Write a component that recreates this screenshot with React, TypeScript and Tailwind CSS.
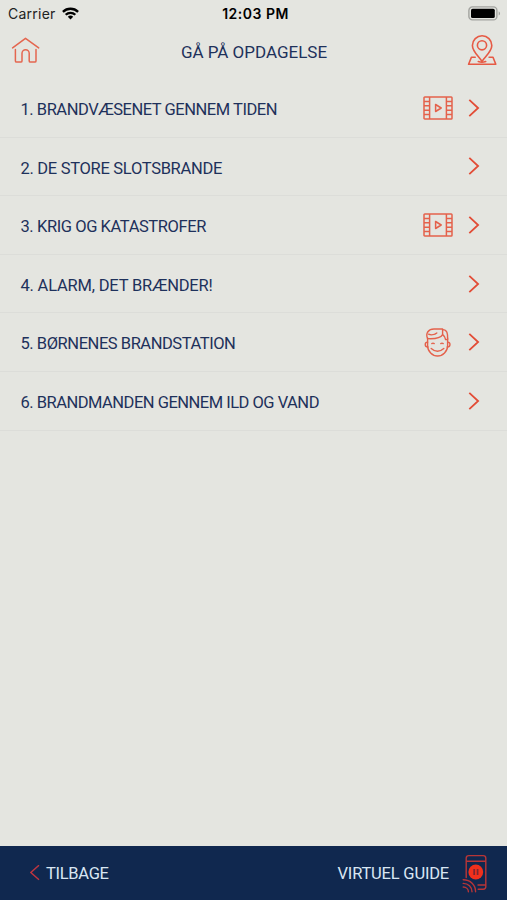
import React from 'react'

type RowIcon = 'film' | 'child'

interface Stop {
  title: string
  icon?: RowIcon
  tracking: string
}

const STOPS: Stop[] = [
  { title: '1. BRANDVÆSENET GENNEM TIDEN', icon: 'film', tracking: 'tracking-[-0.46px]' },
  { title: '2. DE STORE SLOTSBRANDE', tracking: 'tracking-[-0.3px]' },
  { title: '3. KRIG OG KATASTROFER', icon: 'film', tracking: 'tracking-[-0.42px]' },
  { title: '4. ALARM, DET BRÆNDER!', tracking: 'tracking-[-0.2px]' },
  { title: '5. BØRNENES BRANDSTATION', icon: 'child', tracking: 'tracking-[-0.45px]' },
  { title: '6. BRANDMANDEN GENNEM ILD OG VAND', tracking: 'tracking-[-0.5px]' },
]

const WifiIcon = () => (
  <svg className="ml-[6px] h-[13px] w-[17px]" viewBox="0 0 17 13" fill="none" stroke="#000" strokeWidth="2.3">
    <path d="M.9 4.9a10.8 10.8 0 0 1 15.2 0" />
    <path d="M3.7 7.8a6.8 6.8 0 0 1 9.6 0" />
    <path d="M8.5 12.4 5.8 9.7a3.9 3.9 0 0 1 5.4 0z" fill="#000" stroke="none" />
  </svg>
)

const BatteryIcon = () => (
  <svg className="h-[15px] w-[33px]" viewBox="0 0 33 15" fill="none">
    <rect x=".9" y=".9" width="28" height="13" rx="3.5" stroke="#a2a39f" strokeWidth="1.4" />
    <rect x="3" y="2.7" width="23.8" height="9.4" rx="1.6" fill="#000" />
    <path d="M30.7 5.2c1.8.7 1.8 3.7 0 4.4z" fill="#a2a39f" />
  </svg>
)

const HomeIcon = () => (
  <svg className="h-[28px] w-[30px]" viewBox="0 0 30 28" fill="none" stroke="#e4664f" strokeWidth="1.5" strokeLinecap="round" strokeLinejoin="round">
    <path d="M1.6 10.9 14.5 1.3l13.2 9.6" />
    <path d="M4.4 12.5v11.4q0 1.2 1.2 1.2h4.2q1.2 0 1.2-1.2v-7.6a3.6 3.6 0 0 1 7.2 0v7.6q0 1.2 1.2 1.2h4.4q1.2 0 1.2-1.2V12.5" />
  </svg>
)

const MapPinIcon = () => (
  <svg className="h-[32px] w-[31px]" viewBox="0 0 31 32" fill="none" stroke="#e65a45" strokeWidth="1.6" strokeLinecap="round" strokeLinejoin="round">
    <path d="M15 26.5C12 21.5 5.4 16.6 5.4 10.5a9.7 9.7 0 0 1 19.4 0C24.8 16.6 18 21.5 15 26.5z" />
    <circle cx="15" cy="10.3" r="4.6" />
    <path d="M8.2 22.200H4.4L1.6 29.300h27.200L26 22.200h-3.900" />
    <path d="M11.3 26.500q3.700 1.400 7.400 0" />
  </svg>
)

const FilmIcon = () => (
  <svg className="h-[24px] w-[30px]" viewBox="0 0 30 24" fill="none" stroke="#e4614b" strokeWidth="1.5" strokeLinejoin="round">
    <rect x="1" y="1" width="28" height="22" rx=".8" />
    <path d="M6.6 1v22M23.4 1v22M1 5.400h5.600M1 9.800h5.600M1 14.200h5.600M1 18.600h5.600M23.400 5.400H29M23.400 9.800H29M23.400 14.200H29M23.400 18.600H29" />
    <path d="M12.6 8.500v7l5.600-3.500z" />
  </svg>
)

const ChildIcon = () => (
  <svg className="h-[29px] w-[27px]" viewBox="0 0 27 29" fill="none" stroke="#e4614b" strokeWidth="1.4" strokeLinecap="round" strokeLinejoin="round">
    <path d="M3.6 10v7.700c0 5.600 4.800 10.300 10 10.300s10-4.700 10-10.300V10" />
    <path d="M3.6 14.200c-3.200-.4-3.200 4.700.3 4.800M23.600 14.200c3.200-.4 3.200 4.700-.3 4.800" />
    <path d="M3.6 10.600C1.200 5.200 4.600 1 10 1h8.600v5.600c-2.400 4-10 4.300-15 4" />
    <path d="M18.6 1.600c4.400.2 5.400 3.400 5 10h-2q-.3-3.200-3-5" />
    <path d="M4.6 6.200c2.200 1 6 .6 8.200-1.200" />
    <path d="M7.8 15.600q1.200-1 2.400 0M16.800 15.600q1.200-1 2.400 0" />
    <path d="M7.2 20.400q6.300 5.600 12.600 0" />
  </svg>
)

const ChevronRight = () => (
  <svg className="h-[18px] w-[12px]" viewBox="0 0 12 18" fill="none" stroke="#e24c36" strokeWidth="1.8">
    <path d="M1.3.9 10.1 9l-8.800 8.100" />
  </svg>
)

const ChevronLeft = () => (
  <svg className="h-[16px] w-[10px]" viewBox="0 0 10 16" fill="none" stroke="#bd3540" strokeWidth="1.4">
    <path d="M9 .2.9 7.500 9 14.800" />
  </svg>
)

const PhoneIcon = () => (
  <svg className="h-[40px] w-[26px]" viewBox="0 0 26 40" fill="none" stroke="#b83537" strokeWidth="1.4" strokeLinecap="round">
    <path d="M4.2 24.600V5.200q0-2.600 2.600-2.600h14.400q2.600 0 2.600 2.600v28.600q0 2.400-2.600 2.400h-5M4.200 8.300h19.600M16 32h7.800" />
    <circle cx="13.8" cy="19" r="7.4" fill="#f1301c" stroke="none" />
    <path d="M12.2 16v6M15.600 16v6" stroke="#7c2630" strokeWidth="1.7" strokeLinecap="butt" />
    <path d="M1.2 26.800c7.200 0 12.400 5.200 12.400 12M1.200 30.400c5 0 8.800 3.600 8.800 8.400M1.200 34c3 0 5.200 2.200 5.200 4.800" />
  </svg>
)

const StopRow: React.FC<{ stop: Stop }> = ({ stop }) => (
  <li className="flex h-[58.6px] items-center border-b border-[#dcddd9] pl-[20.5px] pr-[27px]">
    <span className={`grow whitespace-nowrap pt-[4.6px] text-[16.5px] leading-5 ${stop.tracking}`}>{stop.title}</span>
    {stop.icon === 'film' && <FilmIcon />}
    {stop.icon === 'child' && <ChildIcon />}
    <span className={stop.icon === 'child' ? 'ml-[17px]' : 'ml-[15px]'}>
      <ChevronRight />
    </span>
  </li>
)

export default function App() {
  return (
    <div className="flex h-[900px] w-[507px] flex-col overflow-hidden bg-[#e4e5e0] font-['Roboto',sans-serif] text-[#1e315b]">
      {/* Status bar */}
      <div className="grid h-[27px] grid-cols-3 items-center pl-[8px] pr-[6px] font-['Inter',sans-serif] text-[14px] leading-none text-black">
        <div className="flex items-center">
          <span className="tracking-[0.25px] text-[#222]">Carrier</span>
          <WifiIcon />
        </div>
        <span className="pl-[2px] text-center text-[14px] font-semibold tracking-[0.5px]">12:03 PM</span>
        <div className="flex justify-end">
          <BatteryIcon />
        </div>
      </div>

      {/* Header */}
      <header className="flex h-[52px] items-center justify-between pt-px pb-[5px] pl-[11px] pr-[9px]">
        <HomeIcon />
        <h1 className="pt-[2px] text-[17px] leading-5 tracking-[-0.01px]">GÅ PÅ OPDAGELSE</h1>
        <MapPinIcon />
      </header>

      <ul className="grow">
        {STOPS.map((stop) => (
          <StopRow key={stop.title} stop={stop} />
        ))}
      </ul>

      {/* Bottom bar */}
      <footer className="flex h-[54px] items-center justify-between bg-[#10284f] pl-[30px] pr-[19px] text-[16.5px] text-[#d9e6f3]">
        <button className="flex items-center gap-[6px] tracking-[-0.3px]">
          <ChevronLeft />
          <span className="pt-[2px]">TILBAGE</span>
        </button>
        <button className="flex items-center gap-[13px] tracking-[-0.2px]">
          <span className="pt-[2px]">VIRTUEL GUIDE</span>
          <PhoneIcon />
        </button>
      </footer>
    </div>
  )
}
